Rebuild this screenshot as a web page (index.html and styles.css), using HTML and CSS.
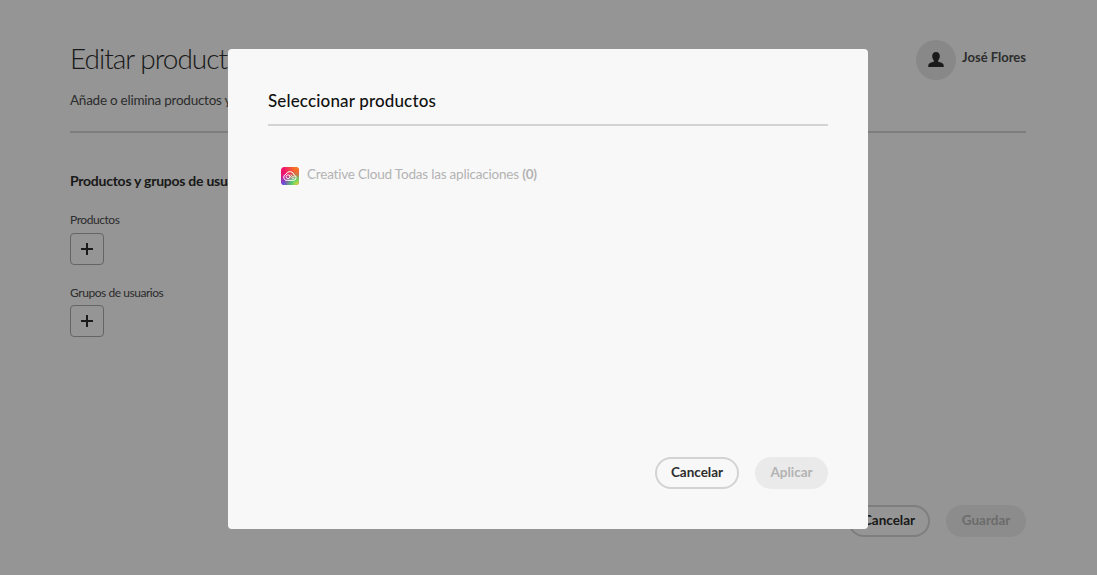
FILE: index.html
```html
<!DOCTYPE html>
<html lang="es">

<head>
    <meta charset="UTF-8">
    <meta name="viewport" content="width=device-width, initial-scale=1.0">
    <title>Editar productos</title>
    <link rel="stylesheet" href="styles.css">
</head>

<body>
    <!-- pagina de fondo -->
    <div class="page">
        <div class="page-head">
            <div class="page-intro">
                <h1>Editar productos y grupos de usuarios</h1>
                <p>Añade o elimina productos y grupos de usuarios para este usuario.</p>
            </div>
            <div class="user">
                <span class="avatar">
                    <svg width="20" height="20" viewBox="0 0 20 20">
                        <path d="M10 2c-2.500 0-3.800 1.800-3.800 4.100 0 1.800.7 3.300 1.600 4.200v1.500c-2.500.6-4.700 1.500-5.200 2.500-.3.700-.4 1.700-.4 2.700h15.600c0-1-.1-2-.4-2.700-.5-1-2.700-1.900-5.200-2.500v-1.500c.9-.9 1.600-2.400 1.600-4.200C13.800 3.800 12.500 2 10 2z" />
                    </svg>
                </span>
                <span class="user-name">José Flores</span>
            </div>
        </div>
        <div class="divider"></div>

        <h2>Productos y grupos de usuarios</h2>

        <div class="field">
            <label>Productos</label>
            <button class="add-btn"><span class="plus"></span></button>
        </div>
        <div class="field">
            <label>Grupos de usuarios</label>
            <button class="add-btn"><span class="plus"></span></button>
        </div>

        <div class="page-actions">
            <button class="btn btn-outline btn-page">Cancelar</button>
            <button class="btn btn-disabled btn-page">Guardar</button>
        </div>
    </div>

    <!-- ventana seleccionar productos -->
    <div class="overlay">
        <div class="modal">
            <div class="modal-title">Seleccionar productos</div>
            <div class="product">
                <svg class="cc-logo" width="18" height="18" viewBox="0 0 18 18">
                    <defs>
                        <clipPath id="ccClip">
                            <rect width="18" height="18" rx="3.500" />
                        </clipPath>
                        <radialGradient id="ccOrange" cx="0.9" cy="0" r="0.75">
                            <stop offset="0" stop-color="#f98a12" />
                            <stop offset="1" stop-color="#f98a12" stop-opacity="0" />
                        </radialGradient>
                        <radialGradient id="ccGreen" cx="0.95" cy="1" r="0.8">
                            <stop offset="0" stop-color="#e2e02c" />
                            <stop offset="0.5" stop-color="#4fc878" />
                            <stop offset="1" stop-color="#4fc878" stop-opacity="0" />
                        </radialGradient>
                        <radialGradient id="ccBlue" cx="0.15" cy="1" r="0.65">
                            <stop offset="0" stop-color="#4a5cf0" />
                            <stop offset="1" stop-color="#7a3cf0" stop-opacity="0" />
                        </radialGradient>
                    </defs>
                    <g clip-path="url(#ccClip)">
                        <rect width="18" height="18" fill="#f0156c" />
                        <rect width="18" height="18" fill="url(#ccBlue)" />
                        <rect width="18" height="18" fill="url(#ccGreen)" />
                        <rect width="18" height="18" fill="url(#ccOrange)" />
                    </g>
                    <path d="M6.800 13.300h5.700a2.700 2.700 0 0 0 .6-5.300 4.300 4.300 0 0 0-8.200-.7 3.050 3.050 0 0 0 1.900 6z" fill="none" stroke="#fff" stroke-width="1" />
                    <circle cx="7" cy="9.700" r="1.900" fill="none" stroke="#fff" stroke-width="0.900" />
                    <path d="M8.400 8.300l2.600 3h2.300M9.700 7.600l1.900 2.100h2.100" fill="none" stroke="#fff" stroke-width="0.800" />
                </svg>
                <span class="product-name">Creative Cloud Todas las aplicaciones <b>(0)</b></span>
            </div>
            <div class="modal-actions">
                <button class="btn btn-outline">Cancelar</button>
                <button class="btn btn-disabled">Aplicar</button>
            </div>
        </div>
    </div>
</body>

</html>
```

FILE: styles.css
```css
* {
    margin: 0;
    padding: 0;
    box-sizing: border-box;
}

body {
    width: 1097px;
    height: 575px;
    overflow: hidden;
    background: #f8f8f8;
    color: #2c2c2c;
    font-family: Lato, "Noto Sans", "Liberation Sans", sans-serif;
}

button {
    font-family: inherit;
}

.page {
    height: 575px;
    padding: 0 71px 0 70px;
    display: flex;
    flex-direction: column;
}

.page-head {
    display: flex;
    justify-content: space-between;
    padding-top: 39px;
    height: 131px;
}

.page-intro h1 {
    font-size: 28px;
    line-height: 38px;
    font-weight: 300;
    letter-spacing: -1px;
    white-space: nowrap;
}

.page-intro p {
    margin-top: 14px;
    font-size: 13.500px;
    line-height: 18px;
    letter-spacing: -0.25px;
    color: #4b4b4b;
    white-space: nowrap;
}

.user {
    display: flex;
    align-items: flex-start;
    gap: 6px;
    padding-top: 1px;
}

.avatar {
    width: 40px;
    height: 40px;
    border-radius: 50%;
    background: #e3e3e3;
    display: flex;
    align-items: center;
    justify-content: center;
}

.avatar svg {
    fill: #2c2c2c;
}

.user-name {
    margin-top: 8px;
    font-size: 13px;
    line-height: 18px;
    font-weight: 700;
    color: #4b4b4b;
}

.divider {
    height: 2px;
    background: #d3d3d3;
}

h2 {
    margin-top: 38px;
    font-size: 14px;
    line-height: 20px;
    font-weight: 700;
    letter-spacing: -0.25px;
}

.field {
    margin-top: 21px;
}

.field + .field {
    margin-top: 20px;
}

.field label {
    display: block;
    font-size: 12px;
    line-height: 16px;
    letter-spacing: -0.45px;
    color: #4b4b4b;
    margin-bottom: 5px;
}

.field + .field label {
    margin-bottom: 4px;
}

.add-btn {
    width: 34px;
    height: 32px;
    background: transparent;
    border: 1px solid #a8a8a8;
    border-radius: 4px;
    display: flex;
    align-items: center;
    justify-content: center;
}

.plus {
    width: 12px;
    height: 12px;
    background:
        linear-gradient(#2c2c2c, #2c2c2c) center / 12px 2px no-repeat,
        linear-gradient(#2c2c2c, #2c2c2c) center / 2px 12px no-repeat;
}

.page-actions {
    margin-top: auto;
    margin-bottom: 38px;
    display: flex;
    justify-content: flex-end;
    gap: 16px;
}

.btn {
    height: 32px;
    width: 84px;
    border-radius: 16px;
    font-size: 13.500px;
    font-weight: 700;
    padding-bottom: 3px;
    white-space: nowrap;
}

.btn-outline {
    background: transparent;
    border: 2px solid #d3d3d3;
    color: #2c2c2c;
}

.btn-disabled {
    width: 73px;
    background: #eaeaea;
    border: none;
    color: #b3b3b3;
}

.btn-page {
    width: 80px;
    padding-bottom: 2px;
}

.btn-outline.btn-page {
    width: 82px;
}

.overlay {
    position: fixed;
    inset: 0;
    background: rgba(0, 0, 0, 0.4);
    display: flex;
    justify-content: center;
    align-items: flex-start;
    padding: 49px 1px 0 0;
}

.modal {
    width: 640px;
    height: 480px;
    background: #f8f8f8;
    border-radius: 4px;
    padding: 40px;
    display: flex;
    flex-direction: column;
}

.modal-title {
    height: 37px;
    border-bottom: 2px solid #d3d3d3;
    font-size: 17px;
    line-height: 24px;
    font-weight: 500;
    letter-spacing: 0.15px;
    color: #111;
}

.product {
    margin-top: 39px;
    padding-left: 13px;
    display: flex;
    align-items: flex-start;
    gap: 8px;
}

.cc-logo {
    margin-top: 2px;
}

.product-name {
    font-size: 13.500px;
    line-height: 18px;
    letter-spacing: -0.2px;
    color: #b3b3b3;
}

.product-name b {
    font-weight: 700;
}

.modal-actions {
    margin-top: auto;
    display: flex;
    justify-content: flex-end;
    gap: 16px;
}
```
